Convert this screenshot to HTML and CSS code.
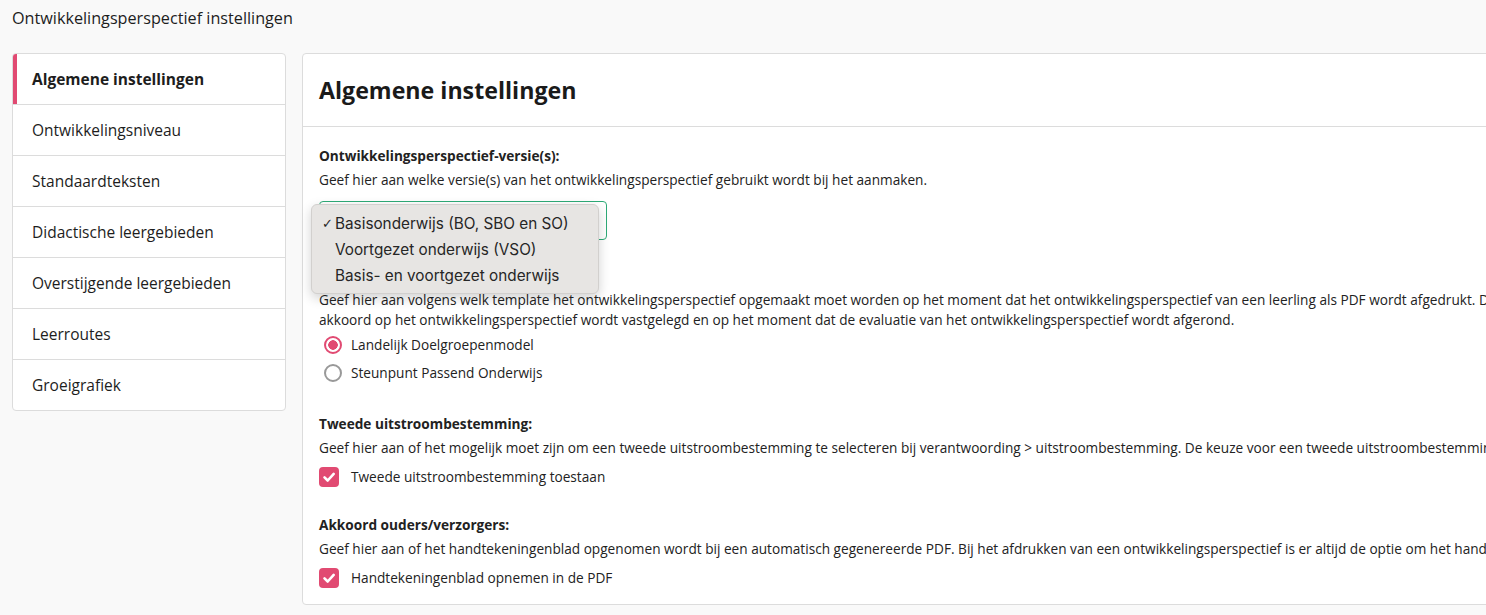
FILE: index.html
```html
<!DOCTYPE html>
<html lang="nl">
<head>
    <meta charset="UTF-8">
    <meta name="viewport" content="width=device-width, initial-scale=1.0">
    <title>Ontwikkelingsperspectief instellingen</title>
    <link rel="stylesheet" href="styles.css">
</head>
<body>
    <div class="page-title">Ontwikkelingsperspectief instellingen</div>

    <div class="layout">
        <nav class="side-menu">
            <a href="#" class="active">Algemene instellingen</a>
            <a href="#">Ontwikkelingsniveau</a>
            <a href="#">Standaardteksten</a>
            <a href="#">Didactische leergebieden</a>
            <a href="#">Overstijgende leergebieden</a>
            <a href="#">Leerroutes</a>
            <a href="#">Groeigrafiek</a>
        </nav>

        <div class="card">
            <div class="card-header">
                <h2>Algemene instellingen</h2>
            </div>
            <div class="card-body">
                <div class="setting">
                    <div class="setting-label">Ontwikkelingsperspectief-versie(s):</div>
                    <div class="setting-help">Geef hier aan welke versie(s) van het ontwikkelingsperspectief gebruikt wordt bij het aanmaken.</div>
                    <div class="select-wrap">
                        <div class="select-box"></div>
                        <!-- open keuzelijst -->
                        <ul class="select-menu">
                            <li class="checked">Basisonderwijs (BO, SBO en SO)</li>
                            <li>Voortgezet onderwijs (VSO)</li>
                            <li>Basis- en voortgezet onderwijs</li>
                        </ul>
                    </div>
                </div>

                <div class="setting">
                    <div class="setting-label">Template PDF:</div>
                    <div class="setting-help">Geef hier aan volgens welk template het ontwikkelingsperspectief opgemaakt moet worden op het moment dat het ontwikkelingsperspectief van een leerling als PDF wordt afgedrukt. Dit geldt ook op het moment dat het<br>akkoord op het ontwikkelingsperspectief wordt vastgelegd en op het moment dat de evaluatie van het ontwikkelingsperspectief wordt afgerond.</div>
                    <div class="options radios">
                        <label class="option"><span class="radio on"></span>Landelijk Doelgroepenmodel</label>
                        <label class="option"><span class="radio"></span>Steunpunt Passend Onderwijs</label>
                    </div>
                </div>

                <div class="setting">
                    <div class="setting-label">Tweede uitstroombestemming:</div>
                    <div class="setting-help nowrap">Geef hier aan of het mogelijk moet zijn om een tweede uitstroombestemming te selecteren bij verantwoording &gt; uitstroombestemming. De keuze voor een tweede uitstroombestemming is niet verplicht.</div>
                    <div class="options">
                        <label class="option"><span class="checkbox"><svg viewBox="0 0 20 20"><path d="M5.5 10.3l3.2 3.2 6-6.6" fill="none" stroke="#fff" stroke-width="2.6" stroke-linecap="round" stroke-linejoin="round"/></svg></span>Tweede uitstroombestemming toestaan</label>
                    </div>
                </div>

                <div class="setting">
                    <div class="setting-label">Akkoord ouders/verzorgers:</div>
                    <div class="setting-help nowrap">Geef hier aan of het handtekeningenblad opgenomen wordt bij een automatisch gegenereerde PDF. Bij het afdrukken van een ontwikkelingsperspectief is er altijd de optie om het handtekeningenblad toe te voegen.</div>
                    <div class="options">
                        <label class="option"><span class="checkbox"><svg viewBox="0 0 20 20"><path d="M5.5 10.3l3.2 3.2 6-6.6" fill="none" stroke="#fff" stroke-width="2.6" stroke-linecap="round" stroke-linejoin="round"/></svg></span>Handtekeningenblad opnemen in de PDF</label>
                    </div>
                </div>
            </div>
        </div>
    </div>
</body>
</html>
```

FILE: styles.css
```css
html {
    overflow: hidden;
}
body {
    font-family: "Open Sans", sans-serif;
    font-size: 13.65px;
    line-height: 20px;
    color: #222;
    background: #f9f9f9;
    margin: 0;
    padding: 8px 12px;
}
.page-title {
    font-size: 16.2px;
    color: #1d1d1d;
}
.layout {
    display: flex;
    align-items: flex-start;
    gap: 16px;
    margin-top: 25px;
}
.side-menu {
    flex: 0 0 274px;
    box-sizing: border-box;
    background: #fff;
    border: 1px solid #dcdcdc;
    border-radius: 4px;
    overflow: hidden;
}
.side-menu a {
    display: block;
    padding: 15px 19px;
    font-size: 15.5px;
    color: #1d1d1d;
    text-decoration: none;
    border-top: 1px solid #dcdcdc;
}
.side-menu a:first-child {
    border-top: none;
}
.side-menu a.active {
    font-weight: 700;
    box-shadow: inset 4px 0 0 #e14a72;
}
.card {
    flex: 0 0 1600px;
    background: #fff;
    border: 1px solid #dcdcdc;
    border-radius: 4px;
}
.card-header {
    padding: 18px 16px;
    border-bottom: 1px solid #dcdcdc;
}
.card-header h2 {
    margin: 0;
    font-size: 23.2px;
    line-height: 36px;
    font-weight: 700;
    color: #1a1a1a;
}
.card-body {
    padding: 19px 16px 12px;
}
.setting {
    margin-bottom: 24px;
}
.setting:last-child {
    margin-bottom: 0;
}
.setting-label {
    font-weight: 700;
}
.setting-help {
    margin-top: 4px;
}
.nowrap {
    white-space: nowrap;
}
.select-wrap {
    position: relative;
    margin-top: 11px;
    padding-bottom: 2px;
}
.select-box {
    width: 288px;
    height: 39px;
    box-sizing: border-box;
    border: 1px solid #2eaa77;
    border-radius: 4px;
}
.select-menu {
    position: absolute;
    top: 3px;
    left: -8px;
    width: 288px;
    box-sizing: border-box;
    margin: 0;
    padding: 6px 0 4px;
    list-style: none;
    background: #e7e5e3;
    border: 1px solid #d2d0ce;
    border-radius: 6px;
    box-shadow: 0 4px 12px rgba(0, 0, 0, 0.18);
    font-family: Inter, sans-serif;
    font-size: 15.3px;
    line-height: 26px;
    color: #262626;
}
.select-menu li {
    padding-left: 23px;
    position: relative;
}
.select-menu li.checked::before {
    content: "✓";
    position: absolute;
    left: 10px;
    font-family: "DejaVu Sans", sans-serif;
    font-size: 13px;
}
.options {
    margin-top: 5px;
}
.radios {
    margin-top: 1px;
    padding-bottom: 3px;
}
.option {
    display: flex;
    align-items: center;
    height: 28px;
}
.radio {
    width: 18px;
    height: 18px;
    box-sizing: border-box;
    border: 2px solid #999;
    border-radius: 50%;
    margin: 0 9px 0 5px;
    background: #fff;
}
.radio.on {
    border-color: #e14a72;
    background: radial-gradient(circle, #e14a72 0 4.5px, #fff 5px);
}
.checkbox {
    width: 20px;
    height: 20px;
    border-radius: 4px;
    background: #e14a72;
    margin-right: 12px;
    display: flex;
}
.checkbox svg {
    width: 20px;
    height: 20px;
}
```
